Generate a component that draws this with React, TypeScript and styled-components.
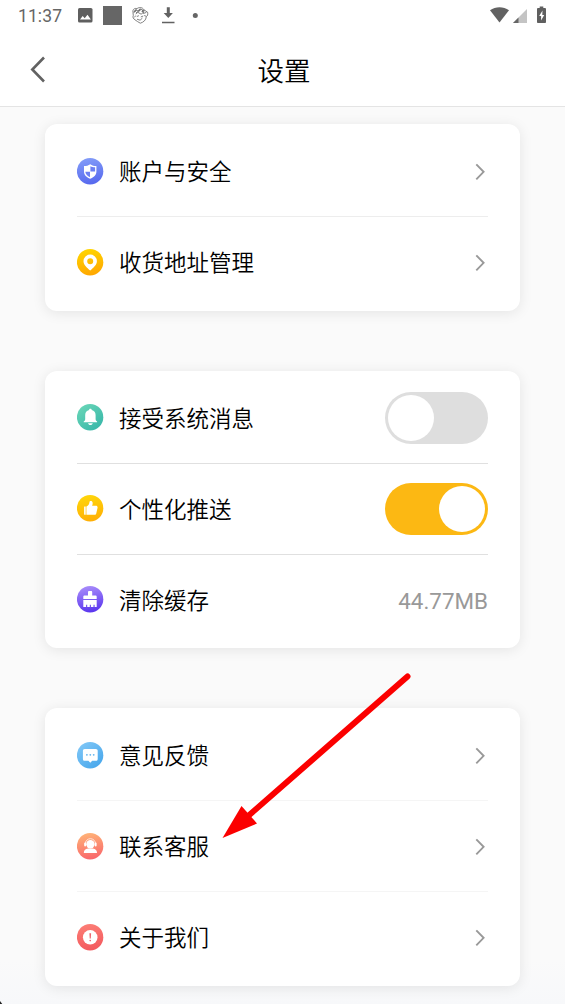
import React from 'react';
import styled, { createGlobalStyle } from 'styled-components';

const GlobalStyle = createGlobalStyle`
  * { box-sizing: border-box; }
  body {
    margin: 0;
    background: #fafafa;
    font-family: Roboto, 'Noto Sans CJK SC', sans-serif;
    color: #000;
  }
`;

const Screen = styled.div`
  position: relative;
  width: 565px;
  height: 1004px;
  overflow: hidden;
  background: linear-gradient(#fafafa 0 960px, #f7f8fa 1004px);
`;

const Header = styled.header`
  height: 107px;
  background: #fff;
  border-bottom: 1px solid #e4e4e4;
`;

const StatusBar = styled.div`
  display: flex;
  justify-content: space-between;
  height: 31px;
  padding: 0 19px 0 18px;
  color: #666;
`;

const StatusGroup = styled.div`
  display: flex;
  align-items: center;
`;

const Clock = styled.span`
  width: 60px;
  padding-top: 1px;
  font-size: 17.5px;
  line-height: 30px;
  letter-spacing: 0.1px;
`;

const Glyph = styled.svg<{ $gap?: number }>`
  display: block;
  flex: none;
  margin-left: ${({ $gap = 0 }) => $gap}px;
  overflow: visible;
`;

const TitleBar = styled.div`
  display: grid;
  grid-template-columns: 60px 1fr 60px;
  align-items: center;
  height: 76px;
  padding-left: 3px;
`;

const BackButton = styled.button`
  display: flex;
  padding: 0 0 0 25px;
  border: 0;
  background: none;
`;

const Title = styled.h1`
  margin: 6px 0 0;
  font-size: 26.5px;
  line-height: 40px;
  font-weight: 350;
  text-align: center;
  color: #000;
`;

const Content = styled.main`
  display: flex;
  flex-direction: column;
  gap: 60px;
  padding: 17px 45px 0;
`;

const Card = styled.section`
  padding: 2px 32px 2.5px;
  border-radius: 12px;
  background: #fff;
  box-shadow: 0 2px 14px rgba(0, 0, 0, 0.09);
`;

const Row = styled.div<{ $line?: string }>`
  display: flex;
  align-items: center;
  height: 91px;
  border-bottom: 1px solid ${({ $line }) => $line ?? 'transparent'};
`;

const Badge = styled.svg`
  flex: none;
  display: block;
  width: 27px;
  height: 27px;
`;

const Label = styled.span`
  flex: 1;
  margin-left: 15px;
  padding-top: 2px;
  font-size: 22.5px;
  font-weight: 350;
  line-height: 32px;
  white-space: nowrap;
`;

const Value = styled.span`
  padding-top: 2px;
  font-size: 22.4px;
  font-weight: 400;
  line-height: 32px;
  color: #999;
`;

const Switch = styled.button<{ $on?: boolean }>`
  display: flex;
  justify-content: ${({ $on }) => ($on ? 'flex-end' : 'flex-start')};
  align-items: center;
  width: 103px;
  height: 52px;
  padding: 0 3px;
  border: 0;
  border-radius: 26px;
  background: ${({ $on }) => ($on ? '#fcb813' : '#dedede')};
`;

const Thumb = styled.span`
  width: 46px;
  height: 46px;
  border-radius: 50%;
  background: #fff;
`;

const Pointer = styled.svg`
  position: absolute;
  left: 220px;
  top: 670px;
  pointer-events: none;
`;

const Corner = styled.svg`
  position: absolute;
  left: 0;
  bottom: 0;
`;

const Chevron = () => (
  <Glyph width="14" height="20" viewBox="0 0 14 20" fill="none" stroke="#999" strokeWidth="1.9">
    <path d="M2.300 3.300 9.600 10.800 2.300 18.300" />
  </Glyph>
);

type IconProps = { id: string; from: string; to: string; diagonal?: boolean; children: React.ReactNode };

const Icon = ({ id, from, to, diagonal, children }: IconProps) => (
  <Badge viewBox="0 0 27 27">
    <defs>
      <linearGradient id={id} x1={diagonal ? '0.1' : '0.4'} y1="0" x2={diagonal ? '0.9' : '0.6'} y2="1">
        <stop offset="0" stopColor={from} />
        <stop offset="1" stopColor={to} />
      </linearGradient>
    </defs>
    <circle cx="13.1" cy="13.2" r="13.2" fill={`url(#${id})`} />
    {children}
  </Badge>
);

const ShieldIcon = () => (
  <Icon id="shield" from="#829bf8" to="#5668ee">
    <path d="M13.200 6.200C11.400 7.600 9.400 8 7 8.100v5.300c0 3.500 2.700 5.900 6.200 7.400 3.500-1.500 6.200-3.900 6.200-7.400V8.100c-2.400-.1-4.400-.5-6.200-1.900Z" fill="#fff" />
    <path d="M13.400 8.300v5.100h4.700V9.300c-1.900-.1-3.300-.3-4.700-1ZM13 13.700H8.300c.2 2.600 2.200 4.300 4.700 5.500Z" fill="#6d80f2" />
  </Icon>
);

const PinIcon = () => (
  <Icon id="pin" from="#ffd500" to="#ffa600">
    <path fillRule="evenodd" d="M13.200 5.600A6.700 6.700 0 0 0 6.500 12.300c0 3.400 3.300 6.400 6.700 9.300 3.400-2.900 6.700-5.900 6.700-9.300a6.700 6.700 0 0 0-6.700-6.700Zm0 3.700a3 3 0 1 1 0 6 3 3 0 0 1 0-6Z" fill="#fff" />
  </Icon>
);

const BellIcon = () => (
  <Icon id="bell" from="#6bd7b8" to="#35b5a8" diagonal>
    <path d="M13.4 4.800c.8 0 1.3.5 1.3 1.3 2.500.6 3.900 2.500 3.900 5v3.900c0 1.100.5 1.800 1.500 2.400v.9H6.700v-.9c1-.6 1.500-1.300 1.500-2.400v-3.900c0-2.500 1.400-4.400 3.900-5 0-.8.5-1.300 1.300-1.300ZM11 19.300h4.800c-.4 1.200-1.200 1.800-2.400 1.800S11.400 20.500 11 19.300Z" fill="#fff" />
  </Icon>
);

const ThumbIcon = () => (
  <Icon id="thumb" from="#ffd60a" to="#ffae05">
    <path d="M7.500 11.500h1.200v8.300H8a.9.9 0 0 1-.9-.9v-7c0-.2.2-.4.4-.4ZM9.400 11.500c2-1 2.900-2.500 3.100-4.600.1-1.400 3.200-1.300 3.200 1.200 0 1-.2 1.800-.6 2.700h3.600c1.600 0 2.100 1 1.800 2.200l-1.200 5.200c-.2 1-.8 1.600-1.800 1.600H9.400Z" fill="#fff" />
  </Icon>
);

const BroomIcon = () => (
  <Icon id="broom" from="#a78bfa" to="#5934ee">
    <path d="M12.200 5h1.800c.8 0 1.200.4 1.200 1.100v3.300h3.200c.8 0 1.300.5 1.300 1.300v2.300H6.300v-2.300c0-.8.5-1.300 1.300-1.300H11V6.100c0-.7.4-1.100 1.200-1.100ZM6.300 14.100h13.400V21h-2.100v-2.200h-1.100V21h-2.600v-2.200h-1.100V21h-2.600v-2.200H9.100V21H6.300Z" fill="#fff" />
  </Icon>
);

const ChatIcon = () => (
  <Icon id="chat" from="#82c8f7" to="#44a5eb" diagonal>
    <path d="M7.800 7h11c1.200 0 1.900.7 1.900 1.900v8c0 1.200-.7 1.900-1.900 1.900h-3.600l-1.900 1.900-1.900-1.900H7.800c-1.200 0-1.900-.7-1.900-1.900v-8C5.900 7.700 6.600 7 7.800 7Z" fill="#fff" />
    <g fill="#64b5ee">
      <circle cx="9.900" cy="12.800" r="0.900" />
      <circle cx="13.300" cy="12.800" r="0.900" />
      <circle cx="16.700" cy="12.800" r="0.900" />
    </g>
  </Icon>
);

const AgentIcon = () => (
  <Icon id="agent" from="#ffb277" to="#f9666b">
    <path d="M8.200 12.400v-1.500a5.200 5.200 0 0 1 10.400 0v1.500" fill="none" stroke="#ffe7dc" strokeWidth="1" />
    <rect x="7.200" y="9.500" width="1.800" height="4" rx="0.900" fill="#fff" />
    <rect x="17.800" y="9.500" width="1.800" height="4" rx="0.900" fill="#fff" />
    <circle cx="13.400" cy="11.200" r="4.200" fill="#fff" />
    <path d="M11 15.500h4.800c3 .6 4.200 1.900 4.200 4.500H6.800c0-2.600 1.200-3.900 4.200-4.500Z" fill="#fff" />
  </Icon>
);

const AboutIcon = () => (
  <Icon id="about" from="#fc7d75" to="#f3595e">
    <circle cx="13.200" cy="13.300" r="7.300" fill="#fff" />
    <path d="M12.400 9.200h1.700l-.3 5.300h-1.100Z" fill="#ed646d" />
    <circle cx="13.200" cy="16.600" r="0.800" fill="#ed646d" />
  </Icon>
);

const StatusIcons = () => (
  <>
    <Glyph width="15" height="15" viewBox="0 0 15 15">
      <rect width="14.500" height="14.500" rx="1.600" fill="#5f5f5f" />
      <path d="M2 11.500 4.700 8l2 2.200L9.500 6.800l3.400 4.700Z" fill="#fff" />
    </Glyph>
    <Glyph $gap={10} width="19" height="19" viewBox="0 0 19 19">
      <rect width="19" height="19" fill="#666" />
    </Glyph>
    <Glyph $gap={10} width="17" height="17" viewBox="0 0 17 17" fill="none" stroke="#737373" strokeWidth="0.900">
      <path d="M1 5.500C.2 2.700 2.500.7 5 1.700 7-.2 10.700.2 12 2.900l3.600 2.300c.5 2.300 0 3.600-1.300 4.500-.2 3.500-3 5.600-6 6.500-1.700-1-3.900-2.200-5.300-3.400-1.600-1-2.600-2.500-1.700-4.200Z" />
      <path d="m1.500 5.600 3-2.400 2 1 2-2.400 2.600 1.700M3.700 7l2.200-1.700 3.200 1.900 2.500-2M12 3l-.6 3.500 3-1.100M4.800 9.500l2.100-.8M8.800 10l2.400-1M5 12.200l3.100 1 2.300-2.100M12.200 8.500l2 .8M4 5.800l4.500-3M2.500 10.300l1.200-1.700" />
      <path d="m2 5 2.500-2.500M6.400 4.300l2-2.200M10 5l1.500-2" strokeWidth="1.700" />
    </Glyph>
    <Glyph $gap={13} width="13" height="17" viewBox="0 0 13 17">
      <path d="M4.800.2h3V6h3.100L6.300 11 1.700 6h3.100ZM0 14.800h12.500v1.400H0Z" fill="#626262" />
    </Glyph>
    <Glyph $gap={17} width="6" height="6" viewBox="0 0 6 6">
      <circle cx="3.300" cy="2.500" r="2.500" fill="#666" />
    </Glyph>
  </>
);

const SignalIcons = () => (
  <>
    <Glyph width="19" height="16" viewBox="0 0 19 16">
      <path d="M0 2.300C5.600-1.700 13.400-1.700 19 2.300L9.500 14.500Z" fill="#626262" />
    </Glyph>
    <Glyph $gap={4} width="14" height="14" viewBox="0 0 14 14">
      <path d="M14 0v14H0Z" fill="#c4c4c4" />
      <path d="M5.500 8.500V14H0Z" fill="#666" />
    </Glyph>
    <Glyph $gap={10} width="9" height="17" viewBox="0 0 9 17">
      <path d="M2.700-.5h3.600v1.600h1.500c.7 0 1.200.5 1.200 1.200v12.600c0 .7-.5 1.200-1.200 1.200H1.200C.5 16.100 0 15.600 0 14.900V2.300c0-.7.5-1.200 1.200-1.200h1.500Z" fill="#5f5f5f" />
      <path d="m5.500 3.500-3.300 5.400h1.900v4.600l3.100-5.500H5.300Z" fill="#fff" />
    </Glyph>
  </>
);

export default function App() {
  return (
    <Screen>
      <GlobalStyle />
      <Header>
        <StatusBar>
          <StatusGroup>
            <Clock>11:37</Clock>
            <StatusIcons />
          </StatusGroup>
          <StatusGroup>
            <SignalIcons />
          </StatusGroup>
        </StatusBar>
        <TitleBar>
          <BackButton aria-label="返回">
            <Glyph width="18" height="28" viewBox="0 0 18 28" fill="none" stroke="#626262" strokeWidth="2.600">
              <path d="M16 2.500 4.300 14.500 16 26.500" />
            </Glyph>
          </BackButton>
          <Title>设置</Title>
        </TitleBar>
      </Header>

      <Content>
        <Card>
          <Row $line="#ededed">
            <ShieldIcon />
            <Label>账户与安全</Label>
            <Chevron />
          </Row>
          <Row>
            <PinIcon />
            <Label>收货地址管理</Label>
            <Chevron />
          </Row>
        </Card>

        <Card>
          <Row $line="#e0e0e0">
            <BellIcon />
            <Label>接受系统消息</Label>
            <Switch role="switch" aria-checked={false}>
              <Thumb />
            </Switch>
          </Row>
          <Row $line="#e0e0e0">
            <ThumbIcon />
            <Label>个性化推送</Label>
            <Switch $on role="switch" aria-checked>
              <Thumb />
            </Switch>
          </Row>
          <Row>
            <BroomIcon />
            <Label>清除缓存</Label>
            <Value>44.77MB</Value>
          </Row>
        </Card>

        <Card>
          <Row $line="#f5f5f5">
            <ChatIcon />
            <Label>意见反馈</Label>
            <Chevron />
          </Row>
          <Row $line="#f5f5f5">
            <AgentIcon />
            <Label>联系客服</Label>
            <Chevron />
          </Row>
          <Row>
            <AboutIcon />
            <Label>关于我们</Label>
            <Chevron />
          </Row>
        </Card>
      </Content>

      <Pointer width="195" height="172" viewBox="0 0 195 172">
        <path d="M187.500 6.500 27 147" stroke="#fb0000" strokeWidth="6" strokeLinecap="round" />
        <path d="M2.500 168 21.500 136l15.500 17.500Z" fill="#fb0000" />
      </Pointer>
      <Corner width="3" height="3" viewBox="0 0 4 4">
        <path d="M0 0 3 4H0Z" fill="#222" />
      </Corner>
    </Screen>
  );
}
